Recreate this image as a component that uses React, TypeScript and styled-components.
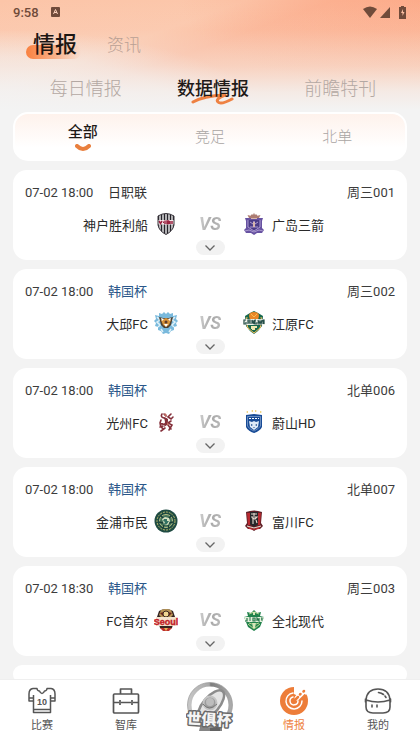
import React from 'react';
import styled, { createGlobalStyle, css } from 'styled-components';

const Global = createGlobalStyle`
  * { box-sizing: border-box; }
  body {
    margin: 0;
    background: #f3f3f3;
    color: #222;
    font-family: Roboto, "Noto Sans CJK SC", sans-serif;
  }
  button { border: 0; padding: 0; background: none; font: inherit; color: inherit; cursor: pointer; }
`;

const Screen = styled.div`
  height: 100vh;
  display: flex;
  flex-direction: column;
  overflow: hidden;
  background:
    linear-gradient(180deg, rgba(243,243,243,0) 0, rgba(243,243,243,0.08) 30px, rgba(243,243,243,0.42) 66px, rgba(243,243,243,0.84) 92px, #f3f3f3 110px) 0 0 / 100% 112px no-repeat,
    radial-gradient(ellipse 270px 90px at 0 120px, rgba(243,243,243,0.85) 0, rgba(243,243,243,0.45) 70%, rgba(243,243,243,0) 100%) 0 0 / 100% 112px no-repeat,
    radial-gradient(ellipse 240px 90px at 100% 0, rgba(252,162,128,0.6) 0, rgba(252,162,128,0) 100%) 0 0 / 100% 112px no-repeat,
    linear-gradient(160deg, #fcc5a8 0, #fcc7ab 34%, #fcb899 46%, #fdbf9e 100%) 0 0 / 100% 112px no-repeat,
    #f3f3f3;
`;

const StatusBar = styled.div`
  flex: none;
  height: 24px;
  padding: 0 13px;
  display: flex;
  align-items: center;
  gap: 12px;
  font-size: 13px;
  font-weight: 500;
  color: #704b3a;
`;

const StatusIcons = styled.div`
  margin-left: auto;
  display: flex;
  align-items: center;
  gap: 3px;
  svg { display: block; }
`;

const TitleRow = styled.nav`
  flex: none;
  height: 42px;
  padding: 0 33px;
  display: flex;
  align-items: center;
  gap: 30px;
`;

const TitleTab = styled.button<{ $active?: boolean }>`
  font-size: 17px;
  line-height: 24px;
  font-weight: 300;
  color: #b9a094;
  ${(p) => p.$active && css`
    position: relative;
    z-index: 0;
    font-size: 22px;
    font-weight: 500;
    color: #1c1613;
    &::before {
      content: "";
      position: absolute;
      z-index: -1;
      left: -7px;
      right: -4px;
      bottom: -2px;
      height: 14px;
      border-radius: 7px;
      background: linear-gradient(90deg, #f98140, rgba(250,160,110,0.7) 55%, rgba(252,200,170,0));
    }
  `}
`;

const TabRow = styled.nav`
  flex: none;
  height: 46px;
  padding: 0 16px 0 22px;
  display: grid;
  grid-template-columns: repeat(3, 1fr);
  align-items: center;
`;

const Tab = styled.button<{ $active?: boolean }>`
  position: relative;
  z-index: 0;
  font-size: 18px;
  line-height: 24px;
  font-weight: ${(p) => (p.$active ? 500 : 300)};
  color: ${(p) => (p.$active ? '#1f1a18' : '#b3a8a3')};
`;

const Swoosh = styled.svg`
  position: absolute;
  z-index: -1;
  left: 42px;
  bottom: -5px;
`;

const FilterPanel = styled.nav`
  flex: none;
  height: 49px;
  margin: 0 13px;
  padding: 0 4px;
  display: grid;
  grid-template-columns: repeat(3, 1fr);
  align-items: center;
  border: 2px solid #fff;
  border-radius: 15px;
  background: linear-gradient(180deg, #fef2ec, #fff 75%);
`;

const Filter = styled.button<{ $active?: boolean }>`
  display: flex;
  flex-direction: column;
  align-items: center;
  gap: 2px;
  font-size: 15px;
  line-height: 20px;
  font-weight: ${(p) => (p.$active ? 500 : 300)};
  color: ${(p) => (p.$active ? '#1f1a18' : '#a9a5a3')};
`;

const List = styled.main`
  flex: 1;
  min-height: 0;
  overflow: hidden;
  padding: 9px 13px 0;
  display: flex;
  flex-direction: column;
  gap: 9px;
`;

const Card = styled.article`
  flex: none;
  padding: 13px 12px 5px;
  border-radius: 14px;
  background: #fff;
`;

const Meta = styled.div`
  display: flex;
  align-items: center;
  font-size: 13px;
  line-height: 20px;
  color: #3c3c3c;
`;

const DateText = styled.time`
  min-width: 70px;
  margin-right: 13px;
`;

const League = styled.span<{ $blue?: boolean }>`
  color: ${(p) => (p.$blue ? '#2b578a' : '#333')};
`;

const Code = styled.span`
  margin-left: auto;
`;

const Match = styled.div`
  display: grid;
  grid-template-columns: 1fr 64px 1fr;
  align-items: center;
  height: 22px;
  margin-top: 9px;
  font-size: 13px;
  color: #2a2a2a;
`;

const Team = styled.div<{ $home?: boolean }>`
  display: flex;
  align-items: center;
  gap: 6px;
  justify-content: ${(p) => (p.$home ? 'flex-end' : 'flex-start')};
  white-space: nowrap;
`;

const Crest = styled.svg`
  flex: none;
  display: block;
  width: 24px;
  height: 24px;
`;

const Versus = styled.span`
  text-align: center;
  font-family: "Liberation Sans Narrow", Roboto, sans-serif;
  font-size: 18px;
  line-height: 22px;
  font-weight: 700;
  font-style: italic;
  color: transparent;
  background: linear-gradient(100deg, #cfcfcf 32%, #a9a9a9 52%, #bdbdbd 68%);
  background-clip: text;
  -webkit-background-clip: text;
`;

const Expand = styled.button`
  display: flex;
  align-items: center;
  justify-content: center;
  width: 29px;
  height: 15px;
  margin: 6px auto 0;
  border-radius: 8px;
  background: #f2f2f2;
`;

const BottomNav = styled.nav`
  flex: none;
  height: 67px;
  display: grid;
  grid-template-columns: repeat(5, 1fr);
  background: #fff;
  border-top: 1px solid #efefef;
`;

const NavItem = styled.button<{ $active?: boolean }>`
  display: flex;
  flex-direction: column;
  align-items: center;
  justify-content: flex-start;
  padding-top: 7px;
  font-size: 11px;
  line-height: 16px;
  color: ${(p) => (p.$active ? '#ee8142' : '#555')};
  svg { display: block; margin-bottom: 3px; }
`;

const CupItem = styled(NavItem)`
  padding-top: 1px;
`;

const Kobe = () => (
  <Crest viewBox="0 0 24 24">
    <defs><clipPath id="kobe"><path d="M4 4Q12-1 20 4V13Q19 19 12 22.500Q5 19 4 13Z" /></clipPath></defs>
    <g clipPath="url(#kobe)">
      <path fill="#fff" d="M3 0h18v24H3z" />
      <path stroke="#25232a" strokeWidth="1.700" d="M4.500 0v24M7.500 0v24M10.500 0v24M13.500 0v24M16.500 0v24M19.500 0v24" />
      <path fill="#f5e9ec" d="M4 8h16v4.500H4z" />
      <path stroke="#9b2340" strokeWidth="1.500" d="M5 9l1.500 2.500L8 9M9 10.300h1M11 8.500v3.500M13 9h1.500v2.500H13zM16 9v3M18 9v3" fill="none" />
    </g>
    <path d="M4 4Q12-1 20 4V13Q19 19 12 22.500Q5 19 4 13Z" fill="none" stroke="#38343b" />
  </Crest>
);

const Hiroshima = () => (
  <Crest viewBox="0 0 24 24">
    <path fill="#ac7c72" d="M7 6L5.500 3l3 .8L10 2l1 1L12 .8l1 2.200 1-1 1.500 1.800 3-.8L17 6z" />
    <path fill="#6752a1" d="M3 6h18l-1 3v7l2 2-2 3h-5l-3 2-3-2H4l-2-3 2-2V9z" />
    <path fill="#4b3b86" d="M6 8h12v7l-6 5-6-5z" />
    <path fill="none" stroke="#ab9ad0" d="M6 8v7l6 4 6-4V8M8 10l3 2 1-3 1 3 3-2M8 15h8M3 19l4-1 5 2 5-2 4 1" />
    <path fill="#d7b6ac" d="M9 6h6v1H9zM11 10h2v5h-2z" />
  </Crest>
);

const Daegu = () => (
  <Crest viewBox="0 0 24 24">
    <path fill="#79b9dc" d="M12 3L10 1 8 3 5 2v3L1 4l1 4-2 2 2 2-1 3 3 1v3l3 1 2 3 3-1 3 1 2-3 3-1v-3l3-1-1-3 2-2-2-2 1-4-4 1V2l-3 1-2-2z" />
    <path fill="none" stroke="#dff1f8" strokeWidth="1.500" d="M3 6l3 3-3 2 3 3-2 2M21 6l-3 3 3 2-3 3 2 2M7 18l2 3M17 18l-2 3" />
    <path fill="#4d4032" d="M5 6l4 1h6l4-1-2 8-3 3h-4l-3-3z" />
    <path fill="#d8943b" d="M7 9l5-2 5 2-2 5-3 2-3-2z" />
    <path fill="#fff" d="M7 7l3 1-2 2zM17 7l-3 1 2 2zM10 13h4l-2 3z" />
    <circle cx="12" cy="11" r="1.500" fill="#5b3828" />
  </Crest>
);

const Gangwon = () => (
  <Crest viewBox="0 0 24 24">
    <path fill="#17684d" d="M3 5l5-3 4-2 4 2 5 3-1 10-4 5-4 3-4-3-4-5z" />
    <path fill="#e98627" d="M7 5q0-4 5-4t5 4l-1 4H8z" />
    <path fill="none" stroke="#f7bd55" d="M5 6l-1 5 2 6 6 5 6-5 2-6-1-5M9 3l3 3 3-3" />
    <path fill="#eef1e8" d="M1 8h22v6H1z" />
    <path fill="none" stroke="#254e49" strokeWidth="1.200" d="M4 9H2v4h2v-2M6 13V9h2v4M6 11h2M10 13V9l2 4V9M14 9h-1v4h2v-2M16 9l1 4 1-3 1 3 1-4M21 13V9h1v4" />
    <path fill="#eee7b0" d="M9 15h6v2h-2v2h-3v-1H9z" />
  </Crest>
);

const Gwangju = () => (
  <Crest viewBox="0 0 24 24">
    <g fill="none" stroke="#842f3a" strokeWidth="1.600" strokeLinecap="round">
      <path d="M8 4q-2 3 2 4t3 4-5 2 1 5M17 4l-3 3 3 2 2-2M7 10l-1 3 3 1M17 11l-3 2 4 2-3 5M11 18l-4 3M10 4l2 2M14 15l3 4M6 17l3-1" />
    </g>
    <path fill="#842f3a" d="M10 7l4 2-1 6-3 2 1-5z" />
    <path fill="#bd6b62" d="M11 3l2 2-1 2-2-2zM13 12l2 2-2 2z" />
  </Crest>
);

const Ulsan = () => (
  <Crest viewBox="0 0 24 24">
    <path fill="#ebc85d" d="M4 2l2-1v2zM9 1l2-1v2zM13 0l2 1-2 1zM18 1l2 1-2 1z" />
    <path fill="#184b96" d="M4 5l8-1 8 1v12q-2 4-8 6-6-2-8-6z" />
    <path fill="none" stroke="#8eabd1" strokeWidth=".7" d="M5.500 6.500h13V16q-2 3-6.500 5Q7 19 5.500 16z" />
    <path stroke="#fff" strokeWidth="1.200" strokeDasharray="2 1" d="M7 8.500h10" />
    <path fill="#dfebf8" d="M7 11l3 1 2-1 2 1 3-1-1 6-4 3-4-3z" />
    <path fill="#245291" d="M9 14l2 1-2 1zM15 14l-2 1 2 1zM11 17h2l-1 1z" />
  </Crest>
);

const Gimpo = () => (
  <Crest viewBox="0 0 24 24">
    <circle cx="12" cy="12" r="11.500" fill="#1f4b42" />
    <circle cx="12" cy="12" r="9" fill="none" stroke="#b8b969" strokeDasharray="2 1" />
    <circle cx="12" cy="12" r="6.500" fill="#44735b" stroke="#b9c185" />
    <path fill="none" stroke="#183d36" strokeWidth="1.300" d="M7 7l3 3M17 7l-3 3M5 13l4 1M19 13l-4 1M9 19l1-3M15 19l-1-3" />
    <path fill="#d9e2c1" d="M8 10l3-2 4 1 1 3-2 4-4-1z" />
    <path fill="#337263" d="M10 10h3v2h2l-2 3h-3l1-2-2-1z" />
  </Crest>
);

const Bucheon = () => (
  <Crest viewBox="0 0 24 24">
    <path fill="#612027" d="M4 3q8-3 16 0l-1 11 2 3-3 3h-3l-3 2-3-2H6l-3-3 2-3z" />
    <path fill="#b8292f" d="M5 4h3v12H6zM16 4h3l-1 12h-2zM5 17l7 3 7-3-2 3-5 1-5-1z" />
    <path fill="#26272a" d="M8 3h8v12l-4 3-4-3z" />
    <path fill="none" stroke="#e7dbcf" strokeWidth="1.100" d="M9 5h6M12 4v3M9 8h6l-2 2-3-1M11 10v5M14 11l1 3M5 17l7 2 7-2" />
  </Crest>
);

const Seoul = () => (
  <Crest viewBox="0 0 24 24">
    <path fill="#342522" d="M5 3q7-4 14 0l2 6-3 11-6 3-6-3L3 9z" />
    <path fill="#b79455" d="M7 2q5-2 10 0l2 5-3 3H8L5 7z" />
    <path fill="#6d251e" d="M6 5l4-1-1 4zM18 5l-4-1 1 4z" />
    <circle cx="12" cy="6" r="3" fill="#f1d693" stroke="#3d2a21" />
    <path fill="#f5e4cf" d="M2 9h20v9H2z" />
    <text x="12" y="17" textAnchor="middle" fill="#c32028" stroke="#c32028" strokeWidth=".4" fontFamily="Liberation Sans Narrow, Liberation Sans, sans-serif" fontWeight="700" fontSize="9">Seoul</text>
    <path fill="#bd302c" d="M6 20h12l-3 3H9z" />
    <path fill="#e4b355" d="M10 20h4l-2 3z" />
  </Crest>
);

const Jeonbuk = () => (
  <Crest viewBox="0 0 24 24">
    <path fill="#20824c" d="M12 2l3 3 4-1-1 4 4 1-2 5-2 5-6 4-6-4-2-5-2-5 4-1-1-4 4 1z" />
    <path fill="none" stroke="#b9d593" d="M7 6l5-2 5 2M6 16l6 5 6-5M7 15l3 1M17 15l-3 1" />
    <path fill="#e5f1dc" d="M2 9h20l-2 5H4z" />
    <path fill="none" stroke="#28774c" strokeWidth="1.200" d="M5 10v3H3M7 10h2M7 12h2M11 10v3h2v-3zM15 13v-3l2 3v-3M19 10h1v2h-1" />
    <path fill="#d8e7b9" d="M10 15h4l-1 5h-2zM11 4h2v3h-2z" />
  </Crest>
);

const matches = [
  { date: '07-02 18:00', league: '日职联', blue: false, code: '周三001', home: '神户胜利船', away: '广岛三箭', A: Kobe, B: Hiroshima },
  { date: '07-02 18:00', league: '韩国杯', blue: true, code: '周三002', home: '大邱FC', away: '江原FC', A: Daegu, B: Gangwon },
  { date: '07-02 18:00', league: '韩国杯', blue: true, code: '北单006', home: '光州FC', away: '蔚山HD', A: Gwangju, B: Ulsan },
  { date: '07-02 18:00', league: '韩国杯', blue: true, code: '北单007', home: '金浦市民', away: '富川FC', A: Gimpo, B: Bucheon },
  { date: '07-02 18:30', league: '韩国杯', blue: true, code: '周三003', home: 'FC首尔', away: '全北现代', A: Seoul, B: Jeonbuk },
];

const JerseyIcon = () => (
  <svg width="28" height="28" viewBox="0 0 28 28" fill="none" stroke="#555" strokeWidth="1.500" strokeLinejoin="round">
    <path d="M9 1.500H5Q1 2 1 7v7h4.500v11.500h17V14H27V7q0-5-4-5.500h-4q-.3 2.500-2.500 2.500-1 2.500-2.500 2.500T11.500 4Q9.300 4 9 1.500zM5.500 14V8M22.500 14V8M1 11h4.500M22.500 11H27M5.500 22.500h17" />
    <text x="14" y="18" textAnchor="middle" fill="#555" stroke="none" fontFamily="Liberation Sans, sans-serif" fontSize="9" fontWeight="700">10</text>
  </svg>
);

const BriefcaseIcon = () => (
  <svg width="28" height="28" viewBox="0 0 28 28" fill="none" stroke="#555" strokeWidth="1.700" strokeLinejoin="round">
    <rect x="1.500" y="7" width="25" height="19" rx="1" />
    <path d="M8.500 7V2h11v5M2 15.500h5M9 15.500h10M21 15.500h5M8 13v5M20 13v5" />
  </svg>
);

const CupIcon = () => (
  <svg width="48" height="50" viewBox="0 0 48 50">
    <defs>
      <linearGradient id="ring" x1="0" x2="1"><stop stopColor="#c5c5c5" /><stop offset=".48" stopColor="#a8a8a8" /><stop offset=".52" stopColor="#7d7d7d" /><stop offset="1" stopColor="#aaa" /></linearGradient>
    </defs>
    <path fill="#858585" d="M15 42h21v8H13z" />
    <path fill="#626262" d="M24 42h10v8H24z" />
    <circle cx="24" cy="24" r="20.500" fill="#fff" stroke="url(#ring)" strokeWidth="4" />
    <circle cx="24" cy="24" r="22.500" fill="none" stroke="#999" strokeWidth=".7" />
    <ellipse cx="25" cy="24" rx="18" ry="8" transform="rotate(-50 25 24)" fill="#e4e4e4" stroke="#8c8c8c" strokeWidth="2.500" />
    <circle cx="24" cy="22" r="6.500" fill="#9c9c9c" stroke="#c4c4c4" strokeWidth="2" />
    <circle cx="24" cy="21" r="4" fill="#bdbdbd" />
    <path fill="none" stroke="#777" d="M17 23q6 8 14 0" />
    <text x="23" y="44" textAnchor="middle" transform="rotate(3 24 39)" fontFamily="Noto Sans CJK SC, sans-serif" fontSize="15" fontWeight="900" fill="#f4f4f4" stroke="#696969" strokeWidth="3" strokeLinejoin="round" paintOrder="stroke">世俱杯</text>
  </svg>
);

const RadarIcon = () => (
  <svg width="28" height="28" viewBox="0 0 28 28" fill="none">
    <circle cx="14" cy="14" r="14" fill="#ed7d39" />
    <path fill="#fff" d="M14 0h11l3 3-2 5-3-2-5 3-4-2z" />
    <path fill="#ed7d39" d="M21 8l4-1 3 6-5 1z" />
    <path stroke="#fff" strokeWidth="1.500" strokeLinecap="round" d="M13 6a8 8 0 1 0 9 8M13 10a4 4 0 1 0 5 4" />
    <path stroke="#fff" strokeWidth="5" strokeLinecap="round" d="M17 11l7-7" />
    <path stroke="#ed7d39" strokeWidth="2.500" strokeLinecap="round" d="M14 14l4-4M20 7.500l.5-.5M23.500 4.500l.5-.5" />
  </svg>
);

const HelmetIcon = () => (
  <svg width="28" height="28" viewBox="0 0 28 28" fill="none" stroke="#555" strokeWidth="1.600" strokeLinecap="round">
    <path d="M2 13Q3 2 14 2t12 11v7q0 6-7 6H9q-7 0-7-6zM2 13q12 4 24 0M1.500 12v3M26.500 12v3M14.500 5.500q3 .5 5 2M21 9l1 1.500M8 18v2M13 18v2" />
  </svg>
);

export default function App() {
  return (
    <Screen>
      <Global />
      <StatusBar>
        <span>9:58</span>
        <svg width="9" height="10" viewBox="0 0 9 10"><rect width="9" height="10" rx="1" fill="#704b3a" /><path d="M2.500 7L4.500 2.500 6.500 7M3 5.500h3" stroke="#fcd1bd" fill="none" /></svg>
        <StatusIcons>
          <svg width="14" height="12" viewBox="0 0 14 12"><path fill="#704b3a" d="M0 3q7-5 14 0L7 12z" /></svg>
          <svg width="10" height="11" viewBox="0 0 10 11"><path fill="#704b3a" d="M10 0v11H0z" /></svg>
          <svg width="14" height="13" viewBox="0 0 14 13"><path fill="#704b3a" d="M6 1h2V0h3v1h2v12H6z" /><path fill="#fcc0a2" d="M10 3L8 7h1.500v3L11.500 6H10z" /></svg>
        </StatusIcons>
      </StatusBar>
      <TitleRow>
        <TitleTab $active>情报</TitleTab>
        <TitleTab>资讯</TitleTab>
      </TitleRow>
      <TabRow>
        <Tab>每日情报</Tab>
        <Tab $active>
          数据情报
          <Swoosh width="46" height="14" viewBox="0 0 46 14" fill="none" stroke="#ee8142" strokeWidth="3" strokeLinecap="round" strokeLinejoin="round">
            <path d="M2 10Q12 4 34 3Q24 7 27 10T41 7" />
          </Swoosh>
        </Tab>
        <Tab>前瞻特刊</Tab>
      </TabRow>
      <FilterPanel>
        <Filter $active>
          全部
          <svg width="16" height="8" viewBox="0 0 16 8" fill="none"><path d="M2 2Q8 8 14 2" stroke="#e97f3d" strokeWidth="4" strokeLinecap="round" /></svg>
        </Filter>
        <Filter>竞足</Filter>
        <Filter>北单</Filter>
      </FilterPanel>
      <List>
        {matches.map(({ date, league, blue, code, home, away, A, B }) => (
          <Card key={code}>
            <Meta>
              <DateText>{date}</DateText>
              <League $blue={blue}>{league}</League>
              <Code>{code}</Code>
            </Meta>
            <Match>
              <Team $home>{home}<A /></Team>
              <Versus>VS</Versus>
              <Team><B />{away}</Team>
            </Match>
            <Expand aria-label="展开">
              <svg width="10" height="6" viewBox="0 0 10 6" fill="none" stroke="#666" strokeWidth="1.300"><path d="M.5.500L5 5 9.500.500" /></svg>
            </Expand>
          </Card>
        ))}
        <Card />
      </List>
      <BottomNav>
        <NavItem><JerseyIcon />比赛</NavItem>
        <NavItem><BriefcaseIcon />智库</NavItem>
        <CupItem aria-label="世俱杯"><CupIcon /></CupItem>
        <NavItem $active><RadarIcon />情报</NavItem>
        <NavItem><HelmetIcon />我的</NavItem>
      </BottomNav>
    </Screen>
  );
}
